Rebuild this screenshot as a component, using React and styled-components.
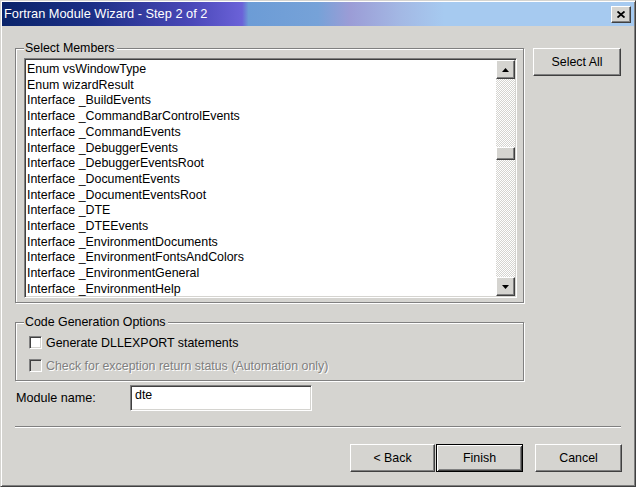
import styled, { createGlobalStyle, css } from 'styled-components'

const FACE = '#d5d4d0'

const GlobalStyle = createGlobalStyle`
  html, body {
    margin: 0;
    padding: 0;
    background: ${FACE};
  }
  body {
    font-family: "Liberation Sans", Arial, sans-serif;
    color: #000;
  }
`

// classic 3d edges
const raised = css`
  background: ${FACE};
  border: 1px solid;
  border-color: #fff #404040 #404040 #fff;
  box-shadow: inset -1px -1px #808080, inset 1px 1px ${FACE};
  box-sizing: border-box;
`
const sunken = css`
  border: 1px solid;
  border-color: #808080 #fff #fff #808080;
  box-shadow: inset 1px 1px #404040, inset -1px -1px ${FACE};
  box-sizing: border-box;
`

const Window = styled.div`
  width: 636px;
  height: 487px;
  box-sizing: border-box;
  background: ${FACE};
  border: 1px solid;
  border-color: ${FACE} #404040 #404040 ${FACE};
  box-shadow: inset 1px 1px #fff, inset -1px -1px #808080;
  padding: 1px;
  display: flex;
  flex-direction: column;
`

const TitleBar = styled.div`
  height: 24px;
  flex-shrink: 0;
  display: flex;
  align-items: center;
  justify-content: space-between;
  padding: 0 3px 0 2px;
  background: linear-gradient(
    90deg,
    #0a246a 0%,
    #1c2f86 14%,
    #4a48b8 30%,
    #6b62d8 38%,
    #6c9cd6 39%,
    #76a2d8 50%,
    #9b9cd6 55%,
    #a3b8e4 63%,
    #a6caf0 70%,
    #a6caf0 100%
  );
`

const TitleText = styled.span`
  color: #fff;
  font-size: 12.8px;
  line-height: 16px;
  white-space: nowrap;
`

const CloseButton = styled.div`
  ${raised};
  width: 20px;
  height: 17px;
  display: flex;
  align-items: center;
  justify-content: center;
  margin-top: 1px;
`

const Body = styled.div`
  flex: 1;
  display: flex;
  flex-direction: column;
  padding: 15px 12px 0 13px;
`

const TopRow = styled.div`
  display: flex;
  align-items: flex-start;
`

const GroupBox = styled.fieldset`
  margin: 0;
  margin-top: ${({ $top }) => $top || 0}px;
  width: 509px;
  min-width: 0;
  box-sizing: border-box;
  padding: ${({ $pad }) => $pad};
  border: 1px solid #808080;
  box-shadow: 1px 1px 0 #fff, inset 1px 1px 0 #fff;
`

const Legend = styled.legend`
  padding: 0 2px 0 1px;
  background: ${FACE};
  font-size: 12.4px;
  line-height: 14px;
`

const ListBox = styled.div`
  ${sunken};
  display: flex;
  width: 493px;
  height: 240px;
  padding: 1px;
  background: #fff;
`

const Items = styled.ul`
  flex: 1;
  margin: 0;
  padding: 2px 0 0 1px;
  list-style: none;
  overflow: hidden;
  font-size: 12.4px;
  line-height: 15.7px;
  white-space: nowrap;
`

const ScrollBar = styled.div`
  width: 19px;
  display: flex;
  flex-direction: column;
`

const ArrowButton = styled.div`
  ${raised};
  height: 19px;
  display: flex;
  align-items: center;
  justify-content: center;
`

const Track = styled.div`
  flex: 1;
  display: flex;
  flex-direction: column;
  background-color: #fff;
  background-image: conic-gradient(#fff 25%, ${FACE} 0 50%, #fff 0 75%, ${FACE} 0);
  background-size: 2px 2px;
`

const Thumb = styled.div`
  ${raised};
  height: 13px;
  margin-top: ${({ $offset }) => $offset}px;
`

const SideButton = styled.button`
  ${raised};
  width: 88px;
  height: 28px;
  margin: 7px 0 0 9px;
  padding: 0;
  font-family: inherit;
  font-size: 12.4px;
  color: #000;
`

const OptionRow = styled.label`
  display: flex;
  align-items: center;
  height: 23px;
  padding-left: 5px;
  font-size: 12.4px;
  color: ${({ $disabled }) => ($disabled ? '#808080' : '#000')};
  text-shadow: ${({ $disabled }) => ($disabled ? '1px 1px 0 #fff' : 'none')};
`

const CheckBox = styled.span`
  ${sunken};
  width: 13px;
  height: 13px;
  margin-right: 4px;
  background: ${({ $disabled }) => ($disabled ? FACE : '#fff')};
`

const FieldRow = styled.div`
  display: flex;
  align-items: center;
  margin-top: 4px;
  height: 26px;
`

const FieldLabel = styled.span`
  width: 114px;
  padding-left: 1px;
  font-size: 12.6px;
`

const TextField = styled.div`
  ${sunken};
  width: 182px;
  height: 26px;
  background: #fff;
  padding: 1px 4px;
  font-size: 12.4px;
  line-height: 16px;
`

const Separator = styled.div`
  width: 606px;
  margin-top: 15px;
  border-top: 1px solid #808080;
  border-bottom: 1px solid #fff;
`

const ButtonRow = styled.div`
  display: flex;
  justify-content: flex-end;
  margin-top: 16px;
`

const PushButton = styled.button`
  ${raised};
  width: ${({ $w }) => $w}px;
  height: 28px;
  margin-left: ${({ $gap }) => $gap || 0}px;
  padding: 0;
  font-family: inherit;
  font-size: 12.4px;
  color: #000;
  ${({ $default }) =>
    $default &&
    css`
      border: 1px solid #000;
      box-shadow: inset 1px 1px #fff, inset -1px -1px #404040, inset 2px 2px ${FACE},
        inset -2px -2px #808080;
    `}
`

const Arrow = ({ down }) => (
  <svg width="7" height="4" viewBox="0 0 7 4">
    <polygon points={down ? '0,0 7,0 3.5,4' : '0,4 7,4 3.5,0'} fill="#000" />
  </svg>
)

const CloseGlyph = () => (
  <svg width="8" height="7" viewBox="0 0 8 7">
    <path d="M0.5 0.5 L7.5 6.5 M7.5 0.5 L0.5 6.5" stroke="#000" strokeWidth="1.8" fill="none" />
  </svg>
)

const members = [
  'Enum vsWindowType',
  'Enum wizardResult',
  'Interface _BuildEvents',
  'Interface _CommandBarControlEvents',
  'Interface _CommandEvents',
  'Interface _DebuggerEvents',
  'Interface _DebuggerEventsRoot',
  'Interface _DocumentEvents',
  'Interface _DocumentEventsRoot',
  'Interface _DTE',
  'Interface _DTEEvents',
  'Interface _EnvironmentDocuments',
  'Interface _EnvironmentFontsAndColors',
  'Interface _EnvironmentGeneral',
  'Interface _EnvironmentHelp',
]

export default function App() {
  return (
    <>
      <GlobalStyle />
      <Window>
        <TitleBar>
          <TitleText>Fortran Module Wizard - Step 2 of 2</TitleText>
          <CloseButton>
            <CloseGlyph />
          </CloseButton>
        </TitleBar>
        <Body>
          <TopRow>
            <GroupBox $pad="3px 6px 4px 8px">
              <Legend>Select Members</Legend>
              <ListBox>
                <Items>
                  {members.map((m) => (
                    <li key={m}>{m}</li>
                  ))}
                </Items>
                <ScrollBar>
                  <ArrowButton>
                    <Arrow />
                  </ArrowButton>
                  <Track>
                    <Thumb $offset={68} />
                  </Track>
                  <ArrowButton>
                    <Arrow down />
                  </ArrowButton>
                </ScrollBar>
              </ListBox>
            </GroupBox>
            <SideButton>Select All</SideButton>
          </TopRow>

          <GroupBox $top={12} $pad="2px 6px 3px 8px">
            <Legend>Code Generation Options</Legend>
            <OptionRow>
              <CheckBox />
              Generate DLLEXPORT statements
            </OptionRow>
            <OptionRow $disabled>
              <CheckBox $disabled />
              Check for exception return status (Automation only)
            </OptionRow>
          </GroupBox>

          <FieldRow>
            <FieldLabel>Module name:</FieldLabel>
            <TextField>dte</TextField>
          </FieldRow>

          <Separator />

          <ButtonRow>
            <PushButton $w={85}>&lt; Back</PushButton>
            <PushButton $w={87} $gap={1} $default>
              Finish
            </PushButton>
            <PushButton $w={87} $gap={12}>
              Cancel
            </PushButton>
          </ButtonRow>
        </Body>
      </Window>
    </>
  )
}
